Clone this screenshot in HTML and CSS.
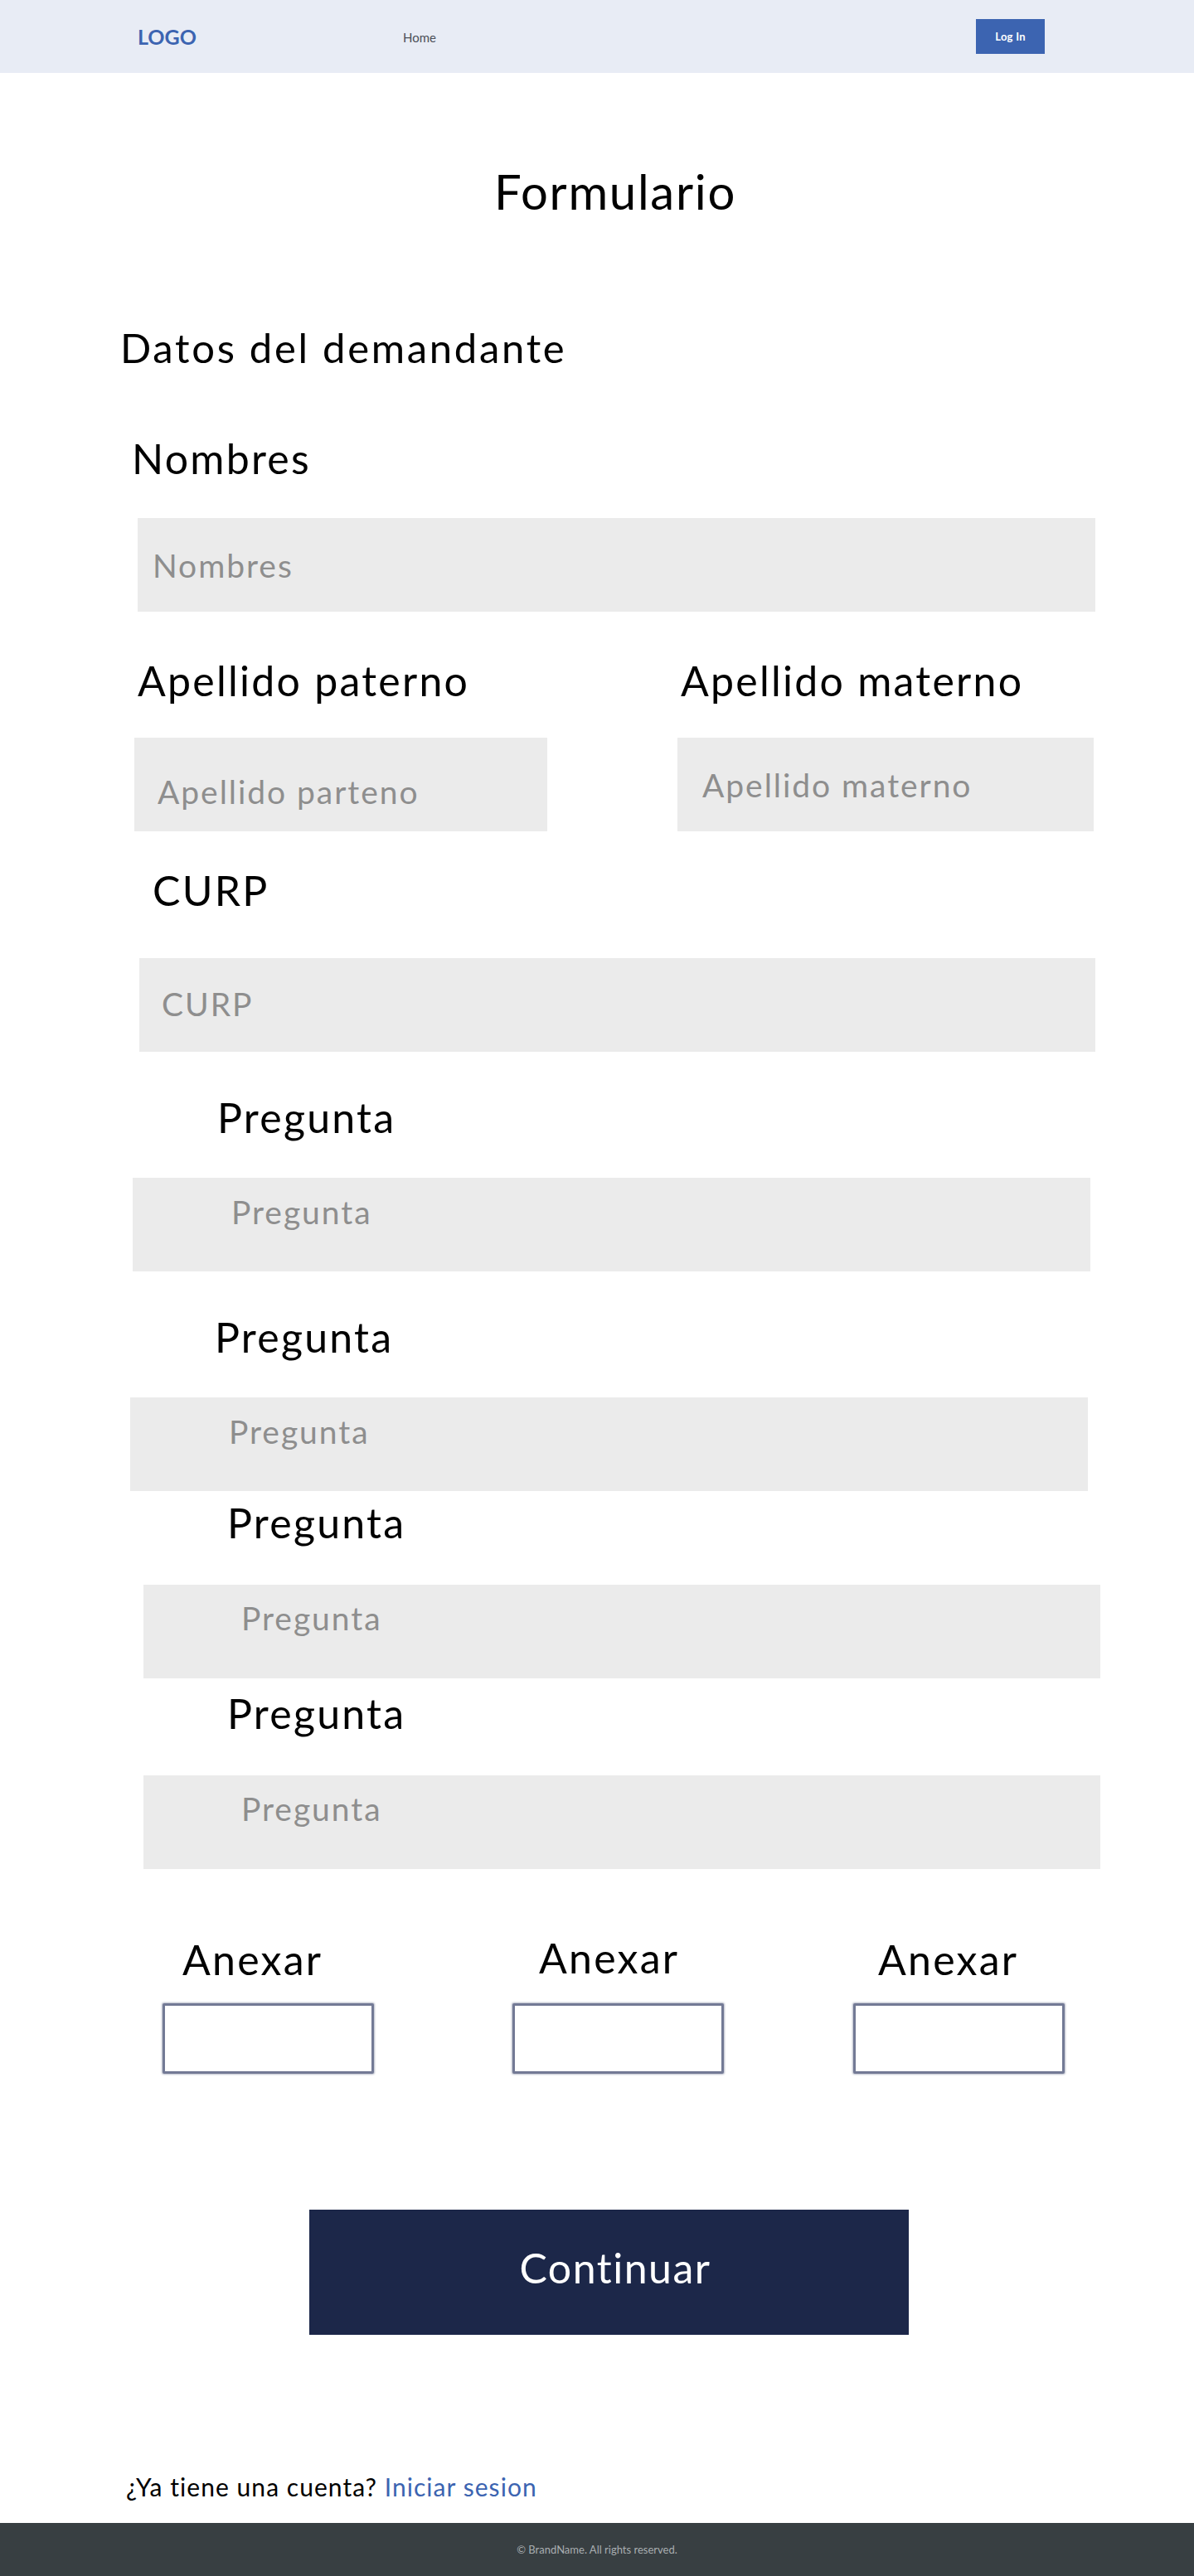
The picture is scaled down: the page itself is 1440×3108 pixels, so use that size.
FILE: index.html
```html
<!DOCTYPE html>
<html lang="es">
<head>
<meta charset="utf-8">
<title>Formulario</title>
<link rel="stylesheet" href="styles.css">
</head>
<body>
<header class="navbar">
  <a class="logo" href="#">LOGO</a>
  <a class="nav-link" href="#">Home</a>
  <button class="login-btn" type="button">Log In</button>
</header>
<main class="page">
  <h1 class="title">Formulario</h1>
  <h2 class="section-title">Datos del demandante</h2>
  <form class="form">
    <label class="label label-nombres" for="nombres">Nombres</label>
    <input class="field field-nombres" id="nombres" type="text" placeholder="Nombres">

    <div class="pair">
      <label class="label pair-label" for="paterno">Apellido paterno</label>
      <label class="label pair-label" for="materno">Apellido materno</label>
      <input class="field field-paterno" id="paterno" type="text" placeholder="Apellido parteno">
      <input class="field field-materno" id="materno" type="text" placeholder="Apellido materno">
    </div>

    <label class="label label-curp" for="curp">CURP</label>
    <input class="field field-curp" id="curp" type="text" placeholder="CURP">

    <label class="label label-q1" for="q1">Pregunta</label>
    <input class="field field-q field-q1" id="q1" type="text" placeholder="Pregunta">

    <label class="label label-q2" for="q2">Pregunta</label>
    <input class="field field-q field-q2" id="q2" type="text" placeholder="Pregunta">

    <label class="label label-q3" for="q3">Pregunta</label>
    <input class="field field-q field-q3" id="q3" type="text" placeholder="Pregunta">

    <label class="label label-q4" for="q4">Pregunta</label>
    <input class="field field-q field-q4" id="q4" type="text" placeholder="Pregunta">

    <div class="attach-row">
      <div class="attach attach-1">
        <span class="label attach-label">Anexar</span>
        <div class="attach-box"></div>
      </div>
      <div class="attach attach-2">
        <span class="label attach-label">Anexar</span>
        <div class="attach-box"></div>
      </div>
      <div class="attach attach-3">
        <span class="label attach-label">Anexar</span>
        <div class="attach-box"></div>
      </div>
    </div>

    <button class="continue-btn" type="button">Continuar</button>
  </form>
  <p class="account">¿Ya tiene una cuenta? <a class="account-link" href="#">Iniciar sesion</a></p>
</main>
<footer class="footer">© BrandName. All rights reserved.</footer>
</body>
</html>
```

FILE: styles.css
```css
* { box-sizing: border-box; }

html, body {
  margin: 0;
  padding: 0;
  background: #ffffff;
  font-family: Lato, "Open Sans", Arial, sans-serif;
  color: #000000;
}

/* ---------- navbar ---------- */
.navbar {
  height: 88px;
  background: #e8ecf5;
  display: flex;
  align-items: center;
  padding-left: 166px;
  padding-right: 180px;
}

.logo {
  width: 320px;
  font-size: 25px;
  font-weight: 700;
  color: #3c64b1;
  text-decoration: none;
  line-height: 25px;
}

.nav-link {
  font-size: 15px;
  color: #4b4f58;
  text-decoration: none;
  line-height: 15px;
  margin-top: 2px;
}

.login-btn {
  margin-left: auto;
  width: 83px;
  height: 42px;
  border: none;
  background: #3c64b1;
  color: #ffffff;
  font-family: Lato, "Open Sans", Arial, sans-serif;
  font-weight: 700;
  font-size: 13px;
  letter-spacing: 0.02em;
  padding: 0;
}

/* ---------- headings ---------- */
.title {
  margin: 114px 0 0;
  padding-left: 44px;
  text-align: center;
  font-size: 58px;
  line-height: 58px;
  font-weight: 400;
  letter-spacing: 0.03em;
}

.section-title {
  margin: 135px 0 0 145px;
  font-size: 49px;
  line-height: 49px;
  font-weight: 400;
  letter-spacing: 0.055em;
}

/* ---------- form ---------- */
.form {
  display: block;
  margin: 0;
}

.label {
  display: block;
  font-size: 50px;
  line-height: 50px;
  font-weight: 400;
  letter-spacing: 0.045em;
  color: #000000;
}

.field {
  display: block;
  height: 113px;
  border: none;
  outline: none;
  background: #ebebeb;
  font-family: Lato, "Open Sans", Arial, sans-serif;
  font-size: 39px;
  letter-spacing: 0.05em;
  color: #333333;
  margin: 0;
  padding: 0;
}

.field::placeholder {
  color: #8e8e8e;
  opacity: 1;
}

.label-nombres { margin: 84px 0 0 159px; }
.field-nombres {
  margin: 47px 0 0 166px;
  width: 1155px;
  padding: 1px 0 0 18px;
}

.pair {
  display: grid;
  grid-template-columns: 498px 502px;
  column-gap: 157px;
  row-gap: 44px;
  margin: 58px 0 0 162px;
}

.pair-label { padding-left: 4px; }

.field-paterno {
  width: 498px;
  padding: 17px 0 0 28px;
}

.field-materno {
  width: 502px;
  padding: 1px 0 0 30px;
}

.label-curp { margin: 46px 0 0 184px; }
.field-curp {
  margin: 57px 0 0 168px;
  width: 1153px;
  padding: 0 0 3px 27px;
}

.field-q { width: 1155px; }

.label-q1 { margin: 54px 0 0 262px; }
.field-q1 {
  margin: 48px 0 0 160px;
  padding: 0 0 31px 119px;
}

.label-q2 { margin: 54px 0 0 259px; }
.field-q2 {
  margin: 48px 0 0 157px;
  padding: 0 0 31px 119px;
}

.label-q3 { margin: 13px 0 0 274px; }
.field-q3 {
  margin: 50px 0 0 173px;
  width: 1154px;
  padding: 0 0 33px 118px;
}

.label-q4 { margin: 17px 0 0 274px; }
.field-q4 {
  margin: 50px 0 0 173px;
  width: 1154px;
  padding: 0 0 33px 118px;
}

/* ---------- attachments ---------- */
.attach-row {
  display: flex;
  margin: 84px 0 0 196px;
}

.attach { width: 255px; }
.attach-1 .attach-label { padding-left: 24px; }
.attach-2 { margin-left: 167px; }
.attach-2 .attach-label { padding-left: 32px; margin-top: -2px; }
.attach-3 { margin-left: 156px; }
.attach-3 .attach-label { padding-left: 30px; }

.attach-2 .attach-box { margin-top: 30px; }

.attach-box {
  margin-top: 28px;
  height: 85px;
  border: 3px solid #737a95;
  border-radius: 2px;
  box-shadow: 0 0 2px 1px rgba(115, 122, 149, 0.5);
  background: #ffffff;
}

/* ---------- continue ---------- */
.continue-btn {
  display: block;
  margin: 164px 0 0 373px;
  width: 723px;
  height: 151px;
  border: none;
  background: #1c2749;
  color: #ffffff;
  font-family: Lato, "Open Sans", Arial, sans-serif;
  font-size: 50px;
  line-height: 50px;
  letter-spacing: 0.03em;
  padding: 0 0 12px 15px;
}

.account {
  margin: 168px 0 0 152px;
  font-size: 30px;
  line-height: 30px;
  letter-spacing: 0.035em;
}

.account-link {
  color: #3c64b1;
  text-decoration: none;
}

/* ---------- footer ---------- */
.footer {
  margin-top: 29px;
  height: 64px;
  background: #383f42;
  color: #a9aeb1;
  font-size: 13px;
  display: flex;
  align-items: center;
  justify-content: center;
}
```
